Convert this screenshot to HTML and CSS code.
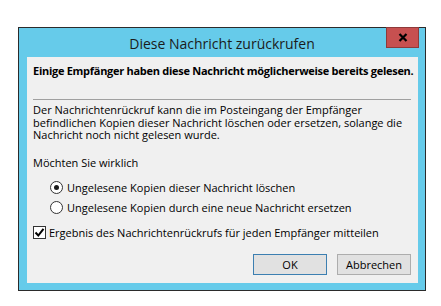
FILE: index.html
```html
<!DOCTYPE html>
<html lang="de">
<head>
    <meta charset="UTF-8">
    <title>Diese Nachricht zurückrufen</title>
    <link rel="stylesheet" href="styles.css">
</head>
<body>
    <div class="window">
        <div class="titlebar">
            <span class="title">Diese Nachricht zurückrufen</span>
            <div class="close">
                <svg width="10" height="9" viewBox="0 0 10 9">
                    <path d="M1.5 1 L8.5 8 M8.5 1 L1.5 8" stroke="#000" stroke-width="2.2"/>
                </svg>
            </div>
        </div>
        <div class="client">
            <p class="warning">Einige Empfänger haben diese Nachricht möglicherweise bereits gelesen.</p>
            <div class="separator"></div>
            <p class="info">Der Nachrichtenrückruf kann die im Posteingang der Empfänger befindlichen Kopien dieser Nachricht löschen oder ersetzen, solange die Nachricht noch nicht gelesen wurde.</p>
            <p class="question">Möchten Sie wirklich</p>
            <div class="options">
                <label class="option"><span class="radio checked"></span>Ungelesene Kopien dieser Nachricht löschen</label>
                <label class="option"><span class="radio"></span>Ungelesene Kopien durch eine neue Nachricht ersetzen</label>
            </div>
            <label class="check">
                <span class="box">
                    <svg width="11" height="11" viewBox="0 0 11 11">
                        <path d="M1.5 5.5 L4.3 8.5 L9.5 1.8" fill="none" stroke="#000" stroke-width="2"/>
                    </svg>
                </span>
                Ergebnis des Nachrichtenrückrufs für jeden Empfänger mitteilen
            </label>
            <div class="buttons">
                <button class="btn default">OK</button>
                <button class="btn">Abbrechen</button>
            </div>
        </div>
    </div>
</body>
</html>
```

FILE: styles.css
```css
* {
    box-sizing: border-box;
    margin: 0;
    padding: 0;
}

body {
    background: #fff;
    font-family: "Open Sans", "Noto Sans", sans-serif;
    font-size: 11px;
    color: #000;
}

.window {
    margin: 27px 0 0 18px;
    width: 408px;
    height: 264px;
    border: 1px solid #2b2b2b;
    background: #66cbea;
    display: flex;
    flex-direction: column;
}

.titlebar {
    position: relative;
    height: 29px;
    display: flex;
    justify-content: center;
    align-items: center;
}

.title {
    font-size: 14px;
    color: #1b1b1b;
    padding-top: 2px;
}

.close {
    position: absolute;
    top: -1px;
    right: 6px;
    width: 33px;
    height: 21px;
    background: #c75050;
    border: 1px solid #8e3a3a;
    display: flex;
    justify-content: center;
    align-items: center;
}

.client {
    margin: 0 7px 0 8px;
    height: 226px;
    background: #f0f0f0;
    padding: 7px 6px 0 6px;
    display: flex;
    flex-direction: column;
}

.warning {
    font-weight: bold;
    line-height: 13px;
    white-space: nowrap;
    letter-spacing: -0.28px;
}

.separator {
    margin-top: 22px;
    height: 1px;
    width: 378px;
    background: #a0a0a0;
}

.info {
    margin-top: 4px;
    line-height: 12.5px;
    width: 380px;
}

.question {
    margin-top: 14px;
    line-height: 13px;
}

.options {
    margin: 12px 0 0 17px;
    display: flex;
    flex-direction: column;
    gap: 7px;
}

.option,
.check {
    display: flex;
    align-items: center;
    gap: 4px;
    line-height: 13px;
}

.radio {
    width: 13px;
    height: 13px;
    border: 1px solid #333;
    border-radius: 50%;
    background: #fff;
    display: flex;
    justify-content: center;
    align-items: center;
}

.radio.checked::after {
    content: '';
    width: 5px;
    height: 5px;
    border-radius: 50%;
    background: #1a1a1a;
}

.check {
    margin-top: 12px;
    gap: 3px;
}

.box {
    width: 13px;
    height: 13px;
    border: 1px solid #333;
    background: #fff;
    display: flex;
    justify-content: center;
    align-items: center;
}

.buttons {
    margin-top: 15px;
    display: flex;
    justify-content: flex-end;
    gap: 10px;
    width: 378px;
}

.btn {
    width: 74px;
    height: 21px;
    font-family: inherit;
    font-size: 11px;
    background: #e1e1e1;
    border: 1px solid #adadad;
    color: #000;
}

.btn.default {
    border-color: #3c7fb1;
}
```
